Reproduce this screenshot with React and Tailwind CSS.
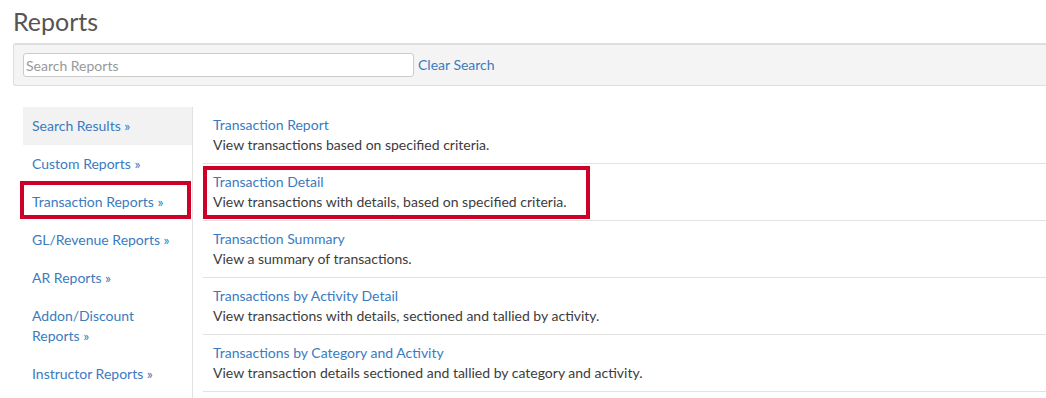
import React from "react";

const navItems = [
  { label: "Search Results »", active: true },
  { label: "Custom Reports »" },
  { label: "Transaction Reports »", marked: true },
  { label: "GL/Revenue Reports »" },
  { label: "AR Reports »" },
  { label: "Addon/Discount Reports »" },
  { label: "Instructor Reports »" },
];

const reports = [
  { title: "Transaction Report", desc: "View transactions based on specified criteria." },
  { title: "Transaction Detail", desc: "View transactions with details, based on specified criteria.", marked: true },
  { title: "Transaction Summary", desc: "View a summary of transactions." },
  { title: "Transactions by Activity Detail", desc: "View transactions with details, sectioned and tallied by activity." },
  { title: "Transactions by Category and Activity", desc: "View transaction details sectioned and tallied by category and activity." },
];

export default function App() {
  return (
    <div
      className="min-h-[398px] bg-white pl-[13px] pt-[6px] text-[14px] leading-[20px] text-[#3c3c3c]"
      style={{ fontFamily: "Lato, 'Open Sans', sans-serif" }}
    >
      <h1 className="text-[25px] leading-[30px] text-[#555] font-normal">Reports</h1>

      {/* search bar */}
      <div className="mt-[7px] flex items-center h-[43px] pl-[9px] bg-[#f4f4f4] border border-[#dedede] border-t-2 border-r-0 rounded-l-[3px]">
        <input
          type="text"
          placeholder="Search Reports"
          className="w-[391px] h-[24px] px-[2px] bg-white border border-[#ccc] rounded-[3px] text-[14px] placeholder:text-[#999] outline-none"
        />
        <a className="ml-[4px] text-[#3a7bbf]" href="#">Clear Search</a>
      </div>

      <div className="mt-[21px] flex">
        {/* left nav */}
        <ul className="ml-[10px] w-[170px] border-r border-[#e2e2e2] pb-[10px]">
          {navItems.map((item) => (
            <li
              key={item.label}
              className={`relative py-[9px] pl-[9px] pr-[10px] text-[#3a7bbf] ${item.active ? "bg-[#f2f2f2]" : ""}`}
            >
              {item.label}
              {item.marked && (
                <span className="pointer-events-none absolute -left-[3px] -top-[2px] w-[171px] h-[38px] border-4 border-[#cc0029]" />
              )}
            </li>
          ))}
        </ul>

        {/* report list */}
        <div className="ml-[10px] flex-1">
          {reports.map((r) => (
            <div key={r.title} className="relative pt-[8px] pb-[8px] pl-[10px] border-b border-[#e2e2e2]">
              <a href="#" className="block text-[#3a7bbf]">{r.title}</a>
              <p>{r.desc}</p>
              {r.marked && (
                <span className="pointer-events-none absolute left-0 top-[2px] w-[387px] h-[53px] border-4 border-[#cc0029]" />
              )}
            </div>
          ))}
        </div>
      </div>
    </div>
  );
}
